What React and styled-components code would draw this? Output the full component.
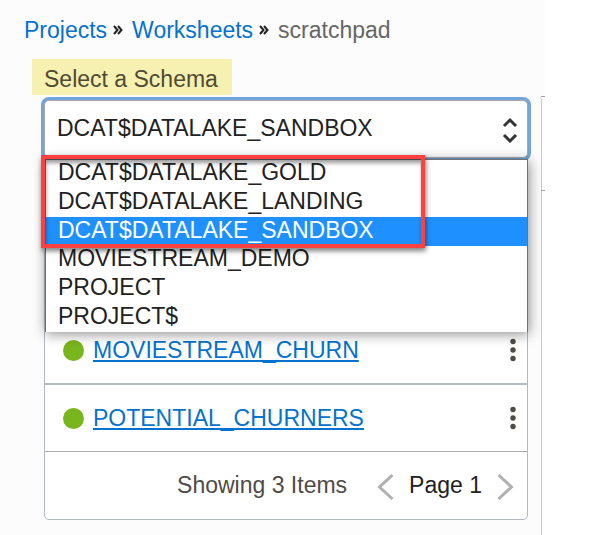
import React, { useState } from "react";
import styled, { createGlobalStyle } from "styled-components";

const GlobalStyle = createGlobalStyle`
  *, *::before, *::after { box-sizing: border-box; }
  body {
    margin: 0;
    background: #ffffff;
    color: #222222;
    font-family: "Liberation Sans", Arial, sans-serif;
    font-size: 23px;
    line-height: 28px;
  }
  button, select { font: inherit; color: inherit; }
`;

const Page = styled.div`
  display: flex;
  flex-direction: column;
  min-height: 100vh;
  margin-right: 53px;
`;

const Header = styled.header`
  display: flex;
  flex-direction: column;
  align-items: flex-start;
  gap: 15px;
  padding: 16px 24px 2px;
  background: #fcfcfc;
`;

const Crumbs = styled.nav`
  display: flex;
  align-items: center;
  white-space: nowrap;
`;

const CrumbLink = styled.a`
  color: #0572ce;
  text-decoration: none;
`;

const CrumbCurrent = styled.span`
  color: #666666;
`;

const CrumbMark = styled.svg`
  flex: none;
  width: 10px;
  height: 10px;
  margin: 0 9px 0 6px;
  fill: none;
  stroke: #222222;
  stroke-width: 2;
`;

const FieldLabel = styled.label`
  margin-left: 8px;
  padding: 6px 14px 2px 12px;
  background: #f6f1b0;
  color: #504a35;
`;

const Panel = styled.div`
  position: relative;
  flex: 1;
  margin-right: 3px;
  padding: 3px 13px 15px 44px;
  border-right: 1px solid #c8c8c8;
  border-top-right-radius: 3px;
  background: #fcfcfc;
`;

const Tick = styled.span`
  position: absolute;
  top: ${(p) => p.$top}px;
  right: -4px;
  width: 4px;
  height: 1px;
  background: #a0a0a0;
`;

const Picker = styled.div`
  position: relative;
`;

const SchemaSelect = styled.select`
  display: block;
  width: 100%;
  height: 58px;
  padding: 0 48px 2px 12px;
  appearance: none;
  border: 1px solid #a9a9a9;
  border-radius: 5px;
  outline: none;
  background: #ffffff;
  box-shadow: 0 0 0 3px #72a4de;
`;

const SelectArrows = styled.svg`
  position: absolute;
  top: 17px;
  right: 10px;
  width: 16px;
  height: 26px;
  fill: none;
  stroke: #333333;
  stroke-width: 3;
  pointer-events: none;
`;

const Options = styled.div`
  position: absolute;
  z-index: 1;
  top: 59px;
  left: 1px;
  right: 0;
  display: grid;
  grid-template-rows: repeat(6, 1fr);
  height: 173px;
  border: 1px solid #6f7175;
  border-bottom: 0;
  background: #ffffff;
  box-shadow: 1px 2px 12px rgba(0, 0, 0, 0.45);
`;

const Option = styled.button`
  display: flex;
  align-items: center;
  min-height: 0;
  padding: 0 0 4px 12px;
  border: 0;
  text-align: left;
  background: ${(p) => (p.$active ? "#1e90ff" : "transparent")};
  color: ${(p) => (p.$active ? "#ffffff" : "#222222")};
`;

const Highlight = styled.div`
  position: absolute;
  z-index: 2;
  top: 55px;
  left: -3px;
  width: 384px;
  height: 93px;
  border: 4px solid #ff4040;
  box-shadow: 1px 3px 5px rgba(0, 0, 0, 0.5), inset 1px 4px 4px rgba(0, 0, 0, 0.4);
  pointer-events: none;
`;

const List = styled.section`
  margin-top: 90px;
  padding-top: 68px;
  border: 1px solid #b2b8c2;
  border-radius: 5px;
  background: #ffffff;
`;

const ItemRow = styled.div`
  display: flex;
  align-items: center;
  height: ${(p) => (p.$last ? 67 : 68)}px;
  padding: 0 7px 0 18px;
  border-bottom: ${(p) => (p.$last ? "1px solid #adadad" : "2px solid #b5bbc5")};
`;

const Status = styled.span`
  flex: none;
  width: 21px;
  height: 21px;
  margin-right: 9px;
  border-radius: 50%;
  background: #79b51c;
`;

const ItemLink = styled.a`
  color: #0572ce;
  text-decoration: underline;
  text-decoration-thickness: 2px;
  text-underline-offset: 2px;
  text-decoration-skip-ink: none;
`;

const MenuButton = styled.button`
  display: flex;
  margin-left: auto;
  padding: 4px;
  border: 0;
  background: none;
  fill: #504b47;
`;

const Footer = styled.footer`
  display: flex;
  align-items: center;
  justify-content: flex-end;
  height: 67px;
  padding: 0 13px 0 16px;
  white-space: nowrap;
`;

const FooterText = styled.span`
  padding-bottom: 2px;
`;

const Count = styled(FooterText)`
  margin-right: 30px;
  color: #504b47;
`;

const PageButton = styled.button`
  display: flex;
  padding: 3px 0 0;
  border: 0;
  background: none;
  stroke: #b0b0b0;
  stroke-width: 3;
  fill: none;
`;

const PageLabel = styled(FooterText)`
  margin: 0 15px;
`;

const schemas = [
  "DCAT$DATALAKE_GOLD",
  "DCAT$DATALAKE_LANDING",
  "DCAT$DATALAKE_SANDBOX",
  "MOVIESTREAM_DEMO",
  "PROJECT",
  "PROJECT$",
];

const items = ["MOVIESTREAM_CHURN", "POTENTIAL_CHURNERS"];

function Separator() {
  return (
    <CrumbMark viewBox="0 0 10 10" aria-hidden="true">
      <path d="M1 1l3.5 4L1 9M5 1l3.5 4L5 9" />
    </CrumbMark>
  );
}

export default function App() {
  const [schema, setSchema] = useState("DCAT$DATALAKE_SANDBOX");

  return (
    <>
      <GlobalStyle />
      <Page>
        <Header>
          <Crumbs aria-label="Breadcrumb">
            <CrumbLink href="#projects">Projects</CrumbLink>
            <Separator />
            <CrumbLink href="#worksheets">Worksheets</CrumbLink>
            <Separator />
            <CrumbCurrent>scratchpad</CrumbCurrent>
          </Crumbs>
          <FieldLabel htmlFor="schema">Select a Schema</FieldLabel>
        </Header>
        <Panel>
          <Tick $top={-1} />
          <Tick $top={93} />
          <Picker>
            <SchemaSelect id="schema" value={schema} onChange={(e) => setSchema(e.target.value)}>
              {schemas.map((name) => (
                <option key={name}>{name}</option>
              ))}
            </SchemaSelect>
            <SelectArrows viewBox="0 0 16 26" aria-hidden="true">
              <path d="M2 9l6-6 6 6M2 18l6 6 6-6" />
            </SelectArrows>
            <Options role="listbox" aria-label="Schemas">
              {schemas.map((name) => (
                <Option
                  key={name}
                  type="button"
                  role="option"
                  aria-selected={name === schema}
                  $active={name === schema}
                  onClick={() => setSchema(name)}
                >
                  {name}
                </Option>
              ))}
            </Options>
            <Highlight />
          </Picker>
          <List>
            {items.map((name, i) => (
              <ItemRow key={name} $last={i === items.length - 1}>
                <Status />
                <ItemLink href={`#${name}`}>{name}</ItemLink>
                <MenuButton type="button" aria-label={`Actions for ${name}`}>
                  <svg width="6" height="24" viewBox="0 0 6 24">
                    <circle cx="3" cy="3.5" r="2.7" />
                    <circle cx="3" cy="12" r="2.7" />
                    <circle cx="3" cy="20.5" r="2.7" />
                  </svg>
                </MenuButton>
              </ItemRow>
            ))}
            <Footer>
              <Count>Showing 3 Items</Count>
              <PageButton type="button" aria-label="Previous page">
                <svg width="17" height="28" viewBox="0 0 17 28">
                  <path d="M15.5 2L2.5 14l13 12" />
                </svg>
              </PageButton>
              <PageLabel>Page 1</PageLabel>
              <PageButton type="button" aria-label="Next page">
                <svg width="17" height="28" viewBox="0 0 17 28">
                  <path d="M1.5 2l13 12-13 12" />
                </svg>
              </PageButton>
            </Footer>
          </List>
        </Panel>
      </Page>
    </>
  );
}
